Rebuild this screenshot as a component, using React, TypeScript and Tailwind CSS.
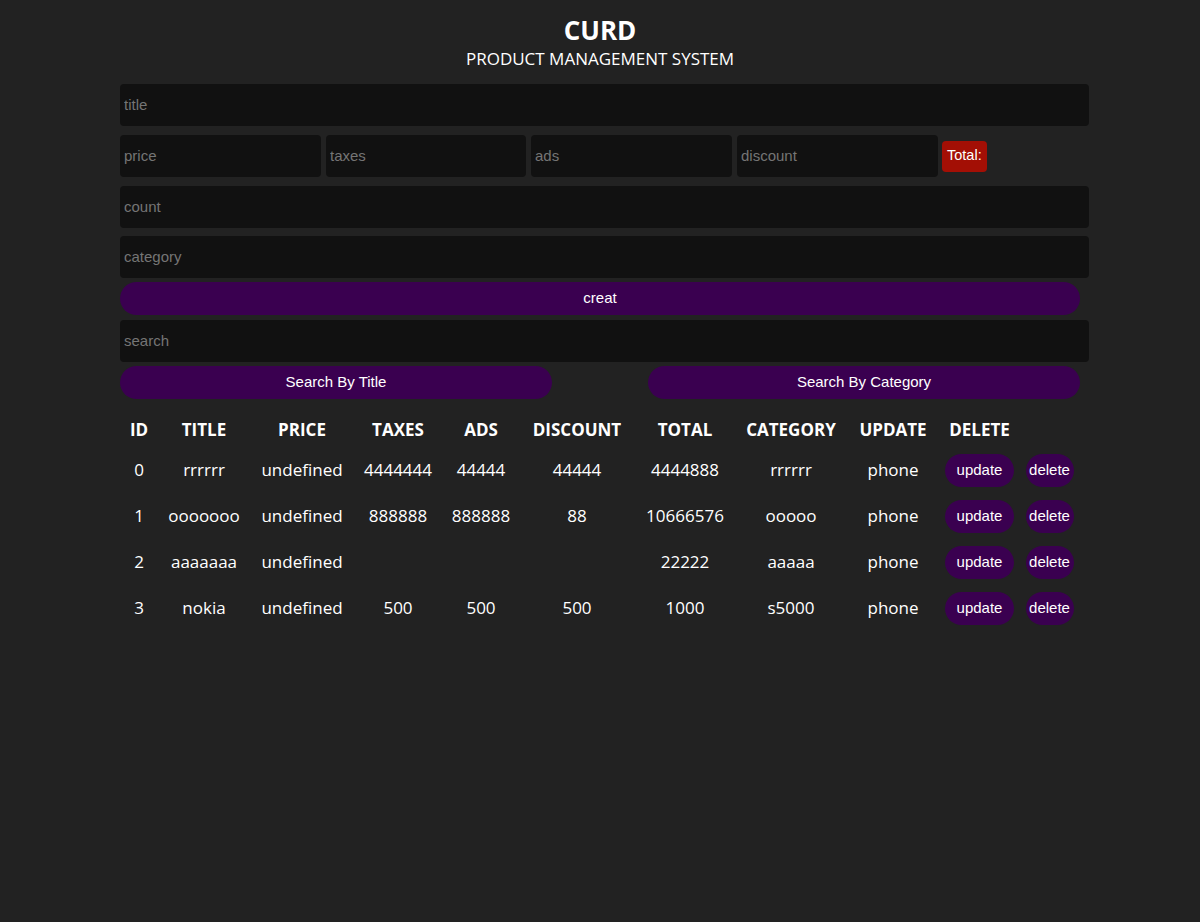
import React from "react";

const rows = [
  ["0", "rrrrrr", "undefined", "4444444", "44444", "44444", "4444888", "rrrrrr", "phone"],
  ["1", "ooooooo", "undefined", "888888", "888888", "88", "10666576", "ooooo", "phone"],
  ["2", "aaaaaaa", "undefined", "", "", "", "22222", "aaaaa", "phone"],
  ["3", "nokia", "undefined", "500", "500", "500", "1000", "s5000", "phone"],
];

const widths = ["w-[38px]", "w-[92px]", "w-[104px]", "w-[88px]", "w-[78px]", "w-[114px]", "w-[102px]", "w-[110px]", "w-[94px]", "w-[79px]", "w-[61px]"];
const heads = ["ID", "TITLE", "PRICE", "TAXES", "ADS", "DISCOUNT", "TOTAL", "CATEGORY", "UPDATE", "DELETE", ""];

const inputCls =
  "h-[42px] bg-[#111111] rounded-[4px] px-[4px] pb-[1px] text-[15px] text-white placeholder:text-[#757575] outline-none border-0 font-['Liberation_Sans',Arial,sans-serif]";

export default function App() {
  return (
    <div className="min-h-[922px] bg-[#222222] text-white font-['Open_Sans',sans-serif]">
      <div className="w-[960px] mx-auto pt-[13px]">
        <div className="text-center">
          <h1 className="text-[26px] font-bold leading-[34px]">CURD</h1>
          <p className="text-[17px] leading-[24px]">PRODUCT MANAGEMENT SYSTEM</p>
        </div>
        <div className="mt-[13px] flex flex-col">
          <input className={`${inputCls} w-[969px]`} placeholder="title" />
          <div className="mt-[9px] flex items-center gap-[5px]">
            <input className={`${inputCls} w-[201px]`} placeholder="price" />
            <input className={`${inputCls} w-[200px]`} placeholder="taxes" />
            <input className={`${inputCls} w-[201px]`} placeholder="ads" />
            <input className={`${inputCls} w-[201px]`} placeholder="discount" />
            <span className="ml-[-1px] h-[31px] px-[5px] flex items-center bg-[#a30f05] rounded-[4px] text-[14.5px] font-['Liberation_Sans',Arial,sans-serif]">
              Total:
            </span>
          </div>
          <input className={`${inputCls} w-[969px] mt-[9px]`} placeholder="count" />
          <input className={`${inputCls} w-[969px] mt-[8px]`} placeholder="category" />
          <button className="mt-[4px] w-[960px] h-[33px] rounded-full bg-[#3a0050] text-[15px] font-['Liberation_Sans',Arial,sans-serif]">
            creat
          </button>
          <input className={`${inputCls} w-[969px] mt-[5px]`} placeholder="search" />
          <div className="mt-[4px] flex justify-between">
            <button className="w-[432px] h-[33px] rounded-full bg-[#3a0050] text-[15px] font-['Liberation_Sans',Arial,sans-serif]">
              Search By Title
            </button>
            <button className="w-[432px] h-[33px] rounded-full bg-[#3a0050] text-[15px] font-['Liberation_Sans',Arial,sans-serif]">
              Search By Category
            </button>
          </div>
        </div>
        <table className="mt-[14px] w-[960px] table-fixed text-center">
          <thead>
            <tr className="h-[34px]">
              {heads.map((h, i) => (
                <th key={i} className={`${widths[i]} text-[17px] font-bold`}>
                  {h}
                </th>
              ))}
            </tr>
          </thead>
          <tbody>
            {rows.map((r, ri) => (
              <tr key={ri} className="h-[46px]">
                {r.map((c, ci) => (
                  <td key={ci} className="text-[17px]">
                    {c}
                  </td>
                ))}
                <td>
                  <button className="h-[33px] w-[69px] rounded-full bg-[#3a0050] text-[15px] font-['Liberation_Sans',Arial,sans-serif]">
                    update
                  </button>
                </td>
                <td>
                  <button className="h-[33px] w-[48px] rounded-full bg-[#3a0050] text-[15px] font-['Liberation_Sans',Arial,sans-serif]">
                    delete
                  </button>
                </td>
              </tr>
            ))}
          </tbody>
        </table>
      </div>
    </div>
  );
}
